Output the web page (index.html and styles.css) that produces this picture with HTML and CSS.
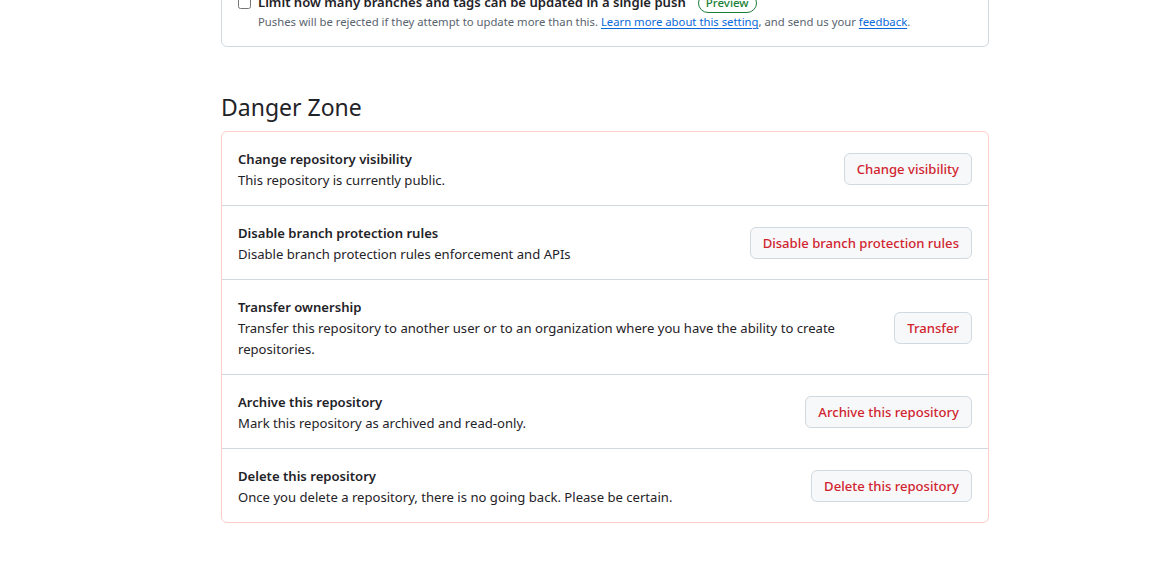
FILE: index.html
```html
<!DOCTYPE html>
<html lang="en">
<head>
<meta charset="utf-8">
<title>Danger Zone</title>
<link rel="stylesheet" href="styles.css">
</head>
<body>
<main class="page">
  <div class="box top-box">
    <div class="check-row">
      <input type="checkbox" class="check">
      <div class="check-body">
        <div class="check-title">Limit how many branches and tags can be updated in a single push <span class="badge">Preview</span></div>
        <div class="note">Pushes will be rejected if they attempt to update more than this. <a href="#">Learn more about this setting</a>, and send us your <a href="#">feedback</a>.</div>
      </div>
    </div>
  </div>

  <h2 class="subhead">Danger Zone</h2>
  <div class="box danger">
    <div class="row">
      <div class="info">
        <strong class="title">Change repository visibility</strong>
        <p class="desc">This repository is currently public.</p>
      </div>
      <button class="btn">Change visibility</button>
    </div>
    <div class="row">
      <div class="info">
        <strong class="title">Disable branch protection rules</strong>
        <p class="desc">Disable branch protection rules enforcement and APIs</p>
      </div>
      <button class="btn">Disable branch protection rules</button>
    </div>
    <div class="row">
      <div class="info narrow">
        <strong class="title">Transfer ownership</strong>
        <p class="desc">Transfer this repository to another user or to an organization where you have the ability to create repositories.</p>
      </div>
      <button class="btn">Transfer</button>
    </div>
    <div class="row">
      <div class="info">
        <strong class="title">Archive this repository</strong>
        <p class="desc">Mark this repository as archived and read-only.</p>
      </div>
      <button class="btn">Archive this repository</button>
    </div>
    <div class="row">
      <div class="info">
        <strong class="title">Delete this repository</strong>
        <p class="desc">Once you delete a repository, there is no going back. Please be certain.</p>
      </div>
      <button class="btn">Delete this repository</button>
    </div>
  </div>
</main>
</body>
</html>
```
FILE: styles.css
```css
html, body {
  margin: 0;
  padding: 0;
  background: #ffffff;
}
body {
  font-family: "Noto Sans", "Open Sans", sans-serif;
  font-size: 13.1px;
  line-height: 21px;
  color: #1f2328;
}
.page {
  width: 768px;
  margin: 0 0 0 221px;
  padding-bottom: 60px;
}
.box {
  border: 1px solid #d1d9e0;
  border-radius: 6px;
}
.top-box {
  margin-top: -25px;
  padding: 16px 16px 15px 16px;
}
.check-row {
  display: flex;
  align-items: flex-start;
  gap: 7px;
}
.check {
  margin: 4px 0 0 0;
  width: 13px;
  height: 13px;
}
.check-title {
  font-weight: 600;
  display: flex;
  align-items: center;
  gap: 12px;
}
.badge {
  display: inline-block;
  font-size: 11.5px;
  font-weight: 500;
  line-height: 18px;
  padding: 0 7px;
  border: 1px solid #1a7f37;
  border-radius: 999px;
  color: #1a7f37;
}
.note {
  font-size: 11.3px;
  line-height: 18px;
  color: #59636e;
}
.note a {
  color: #0969da;
  text-decoration: underline;
  text-underline-offset: 2px;
}
.subhead {
  margin: 42px 0 0 0;
  padding-bottom: 6px;
  font-size: 23px;
  font-weight: 400;
  line-height: 36px;
}
.danger {
  border-color: #ffcecb;
}
.row {
  display: flex;
  align-items: center;
  justify-content: space-between;
  gap: 16px;
  padding: 17px 16px 14px 16px;
  border-top: 1px solid #d1d9e0;
}
.row:first-child {
  border-top: 0;
}
.info {
  flex: 1 1 auto;
}
.info.narrow {
  max-width: 610px;
}
.title {
  display: block;
  font-weight: 600;
}
.desc {
  margin: 0;
}
.btn {
  flex: 0 0 auto;
  height: 32px;
  margin-top: -2px;
  padding: 0 12px;
  font-family: inherit;
  font-size: 13.1px;
  font-weight: 500;
  color: #d1242f;
  background: #f6f8fa;
  border: 1px solid #d1d9e0;
  border-radius: 6px;
  cursor: pointer;
}
```
